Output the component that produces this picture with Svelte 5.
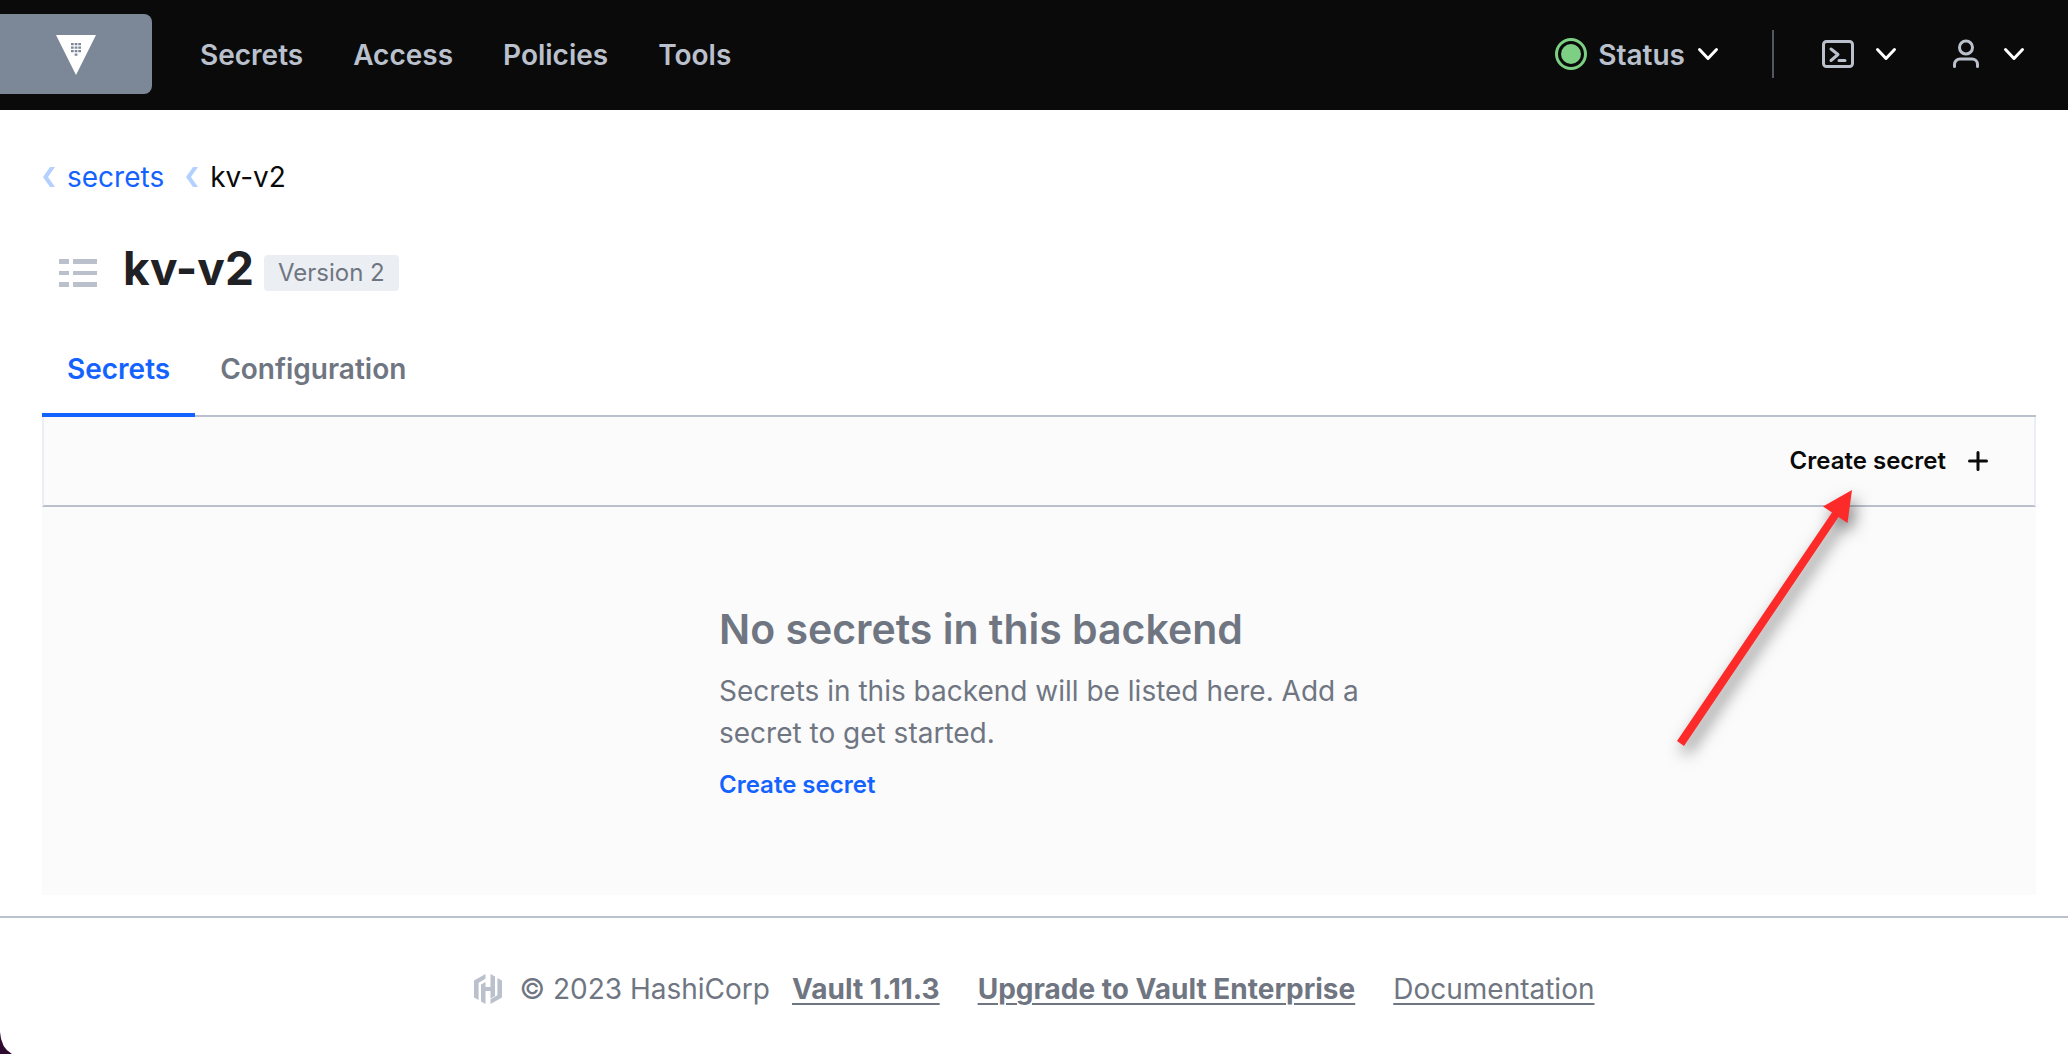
<script>
  const navItems = ['Secrets', 'Access', 'Policies', 'Tools'];
  const tabs = ['Secrets', 'Configuration'];
  let activeTab = $state('Secrets');
</script>

{#snippet chevron()}
  <svg class="chevron" viewBox="0 0 24 24" aria-hidden="true">
    <path d="M3.500 7.500 12 16.500 20.500 7.500" fill="none" stroke="#fff" stroke-width="3" stroke-linecap="round" stroke-linejoin="round" />
  </svg>
{/snippet}

{#snippet crumbMark()}
  <svg class="crumb-mark" viewBox="0 0 12 20" aria-hidden="true">
    <path d="M7 0h5L5 10l7 10H7L0 10z" fill="#b3d0ff" />
  </svg>
{/snippet}

<div class="page">
  <header class="topbar">
    <a class="brand" href="#home" aria-label="Vault home">
      <svg viewBox="0 0 40 40" aria-hidden="true">
        <path d="M0 0h40L20 40z" fill="#fff" />
        <path
          d="M15 8h2.700v2.300H15zM18.700 8h2.700v2.300h-2.700zM22.300 8H25v2.300h-2.700zM15 11.500h2.700v2.300H15zM18.700 11.500h2.700v2.300h-2.700zM22.300 11.500H25v2.300h-2.700zM15 15h2.700v2.300H15zM18.700 15h2.700v2.300h-2.700zM22.300 15H25v2.300h-2.700zM18.700 18.500h2.700v2.300h-2.700z"
          fill="#7c8797"
        />
      </svg>
    </a>
    <nav class="main-nav" aria-label="Main">
      {#each navItems as item}
        <a href="#{item.toLowerCase()}">{item}</a>
      {/each}
    </nav>
    <div class="tools">
      <button class="status" type="button">
        <svg class="dot" viewBox="0 0 32 32" aria-hidden="true">
          <circle cx="16" cy="16" r="14.500" fill="none" stroke="#7dd083" stroke-width="3" />
          <circle cx="16" cy="16" r="10" fill="#7dd083" />
        </svg>
        <span class="status-label">Status</span>
        {@render chevron()}
      </button>
      <span class="divider"></span>
      <button class="icon-button" type="button" aria-label="Console">
        <svg class="glyph" viewBox="0 0 32 32" aria-hidden="true" fill="none" stroke="#bac1cc" stroke-width="3" stroke-linecap="round" stroke-linejoin="round">
          <rect x="1.500" y="3.500" width="29" height="25" rx="3" />
          <path d="M9 11l7 5.500-7 6M17 22.500h6" />
        </svg>
        {@render chevron()}
      </button>
      <button class="icon-button" type="button" aria-label="User menu">
        <svg class="glyph" viewBox="0 0 32 32" aria-hidden="true" fill="none" stroke="#bac1cc" stroke-width="3" stroke-linecap="round">
          <circle cx="16" cy="9.500" r="6.500" />
          <path d="M4.500 28.500v-2a5.500 5.500 0 0 1 5.500-5.500h12a5.500 5.500 0 0 1 5.500 5.500v2" />
        </svg>
        {@render chevron()}
      </button>
    </div>
  </header>

  <main>
    <nav class="crumbs" aria-label="Breadcrumb">
      {@render crumbMark()}
      <a href="#secrets">secrets</a>
      {@render crumbMark()}
      <span>kv-v2</span>
    </nav>

    <div class="heading">
      <svg class="list-icon" viewBox="0 0 38 28" aria-hidden="true" fill="#bac1cc">
        <path d="M0 0h10v5H0zM14 0h24v5H14zM0 12h10v4H0zM14 12h24v4H14zM0 23h10v5H0zM14 23h24v5H14z" />
      </svg>
      <h1>kv-v2</h1>
      <span class="badge">Version 2</span>
    </div>

    <div class="tabs" role="tablist">
      {#each tabs as tab}
        <button type="button" role="tab" aria-selected={activeTab === tab} class:active={activeTab === tab} onclick={() => (activeTab = tab)}>{tab}</button>
      {/each}
    </div>

    <div class="toolbar">
      <a class="create" href="#create">
        Create secret
        <svg viewBox="0 0 20 20" aria-hidden="true">
          <path d="M10 1.500v17M1.500 10h17" stroke="#0a0a0a" stroke-width="3" stroke-linecap="round" />
        </svg>
      </a>
      <svg class="arrow" viewBox="0 0 180 260" aria-hidden="true">
        <path d="M177 0l-4.500 33-9-6L9 256l-7-5L157 22.500l-9-6z" fill="#fd2a2a" />
      </svg>
    </div>

    <section class="empty">
      <div class="message">
        <h2>No secrets in this backend</h2>
        <p>Secrets in this backend will be listed here. Add a secret to get started.</p>
        <a href="#create">Create secret</a>
      </div>
    </section>
  </main>

  <footer>
    <svg class="hashi" viewBox="0 0 28 30" aria-hidden="true" fill="#bac1cc">
      <path d="M11.500 0v4.700L4.600 8.700v17.200L0 23.400V6.600zM11.500 8v5h5V0L21 2.600v19.300l-4.500 2.600V17h-5v13L7 27.400V10.600zM23.400 4.100 28 6.600v16.800L16.500 30v-4.700l6.900-4z" />
    </svg>
    <span class="copyright">© 2023 HashiCorp</span>
    <a class="strong" href="#version">Vault 1.11.3</a>
    <a class="strong" href="#upgrade">Upgrade to Vault Enterprise</a>
    <a href="#docs">Documentation</a>
  </footer>
  <svg class="corner" viewBox="0 0 12 22" aria-hidden="true">
    <path d="M0 0v22h12Q1 16 0 0z" fill="#2f0a30" />
  </svg>
</div>

<style>
  :global(body) {
    margin: 0;
    background: #fff;
  }
  .page {
    position: relative;
    display: flex;
    flex-direction: column;
    min-height: 100vh;
    font-family: Inter, 'Liberation Sans', sans-serif;
    font-size: 28px;
    line-height: 42px;
    color: #0a0a0a;
  }
  .page :global(svg) {
    display: block;
    flex: none;
  }
  a {
    color: inherit;
    text-decoration: none;
  }
  button {
    font: inherit;
    color: inherit;
    background: none;
    border: 0;
    padding: 0;
    cursor: pointer;
  }
  h1,
  h2,
  p {
    margin: 0;
  }

  .topbar {
    display: flex;
    align-items: center;
    height: 110px;
    padding: 0 42px 2px 0;
    box-sizing: border-box;
    background: #0a0a0a;
    color: #bac1cc;
    font-weight: 600;
  }
  .brand {
    display: flex;
    align-items: center;
    justify-content: center;
    width: 152px;
    height: 80px;
    padding-top: 2px;
    box-sizing: border-box;
    border-radius: 0 8px 8px 0;
    background: #7c8797;
  }
  .brand svg {
    width: 40px;
    height: 40px;
  }
  .main-nav {
    display: flex;
    gap: 50px;
    margin-left: 48px;
    padding-top: 2px;
  }
  .tools {
    display: flex;
    align-items: center;
    margin-left: auto;
  }
  .status,
  .icon-button {
    display: flex;
    align-items: center;
  }
  .status {
    gap: 11px;
  }
  .status-label {
    padding-top: 2px;
  }
  .dot,
  .glyph {
    width: 32px;
    height: 32px;
  }
  .chevron {
    width: 24px;
    height: 24px;
  }
  .divider {
    width: 2px;
    height: 48px;
    margin: 0 48px 0 52px;
    background: #525761;
  }
  .icon-button {
    gap: 20px;
  }
  .icon-button + .icon-button {
    margin-left: 52px;
  }

  main {
    flex: 1;
    padding: 46px 32px 21px 42px;
  }
  .crumbs {
    display: flex;
    align-items: center;
    padding-left: 1px;
  }
  .crumb-mark {
    width: 12px;
    height: 20px;
    margin-right: 12px;
  }
  .crumbs a {
    color: #1563ff;
    margin-right: 22px;
  }
  .heading {
    display: flex;
    align-items: center;
    margin-top: 40px;
    padding-left: 17px;
  }
  .list-icon {
    width: 38px;
    height: 28px;
    margin-right: 26px;
  }
  h1 {
    padding-bottom: 10px;
    font-size: 46px;
    line-height: 60px;
    font-weight: 700;
    color: #1f2124;
  }
  .badge {
    margin-left: 10px;
    padding: 0 14px;
    border-radius: 4px;
    background: #ebeef2;
    color: #6f7682;
    font-size: 24px;
    line-height: 36px;
  }
  .tabs {
    display: flex;
    margin-top: 17px;
    border-bottom: 2px solid #bac1cc;
  }
  .tabs button {
    height: 92px;
    margin-bottom: -2px;
    padding: 0 25px;
    border-bottom: 4px solid transparent;
    font-weight: 600;
    color: #6f7682;
  }
  .tabs .active {
    color: #1563ff;
    border-color: #1563ff;
  }
  .toolbar {
    position: relative;
    display: flex;
    align-items: center;
    justify-content: flex-end;
    height: 88px;
    padding-right: 46px;
    border: solid #ebeef2;
    border-width: 0 2px;
    border-bottom: 2px solid #bac1cc;
    background: #fbfbfb;
  }
  .create {
    display: flex;
    align-items: center;
    gap: 22px;
    font-size: 24px;
    font-weight: 600;
  }
  .create svg {
    width: 20px;
    height: 20px;
  }
  .arrow {
    position: absolute;
    top: 73px;
    right: 179px;
    width: 180px;
    height: 260px;
    overflow: visible;
    filter: drop-shadow(4px 8px 8px rgb(0 0 0 / 0.5));
    pointer-events: none;
  }
  .empty {
    display: flex;
    justify-content: center;
    padding: 95px 0 92px;
    background: #fbfbfb;
    color: #6f7682;
  }
  .message {
    width: 640px;
  }
  h2 {
    font-size: 41px;
    line-height: 54px;
    font-weight: 600;
    margin-bottom: 14px;
  }
  .message a {
    display: block;
    margin-top: 13px;
    color: #1563ff;
    font-size: 24px;
    line-height: 36px;
    font-weight: 600;
  }

  footer {
    display: flex;
    align-items: center;
    justify-content: center;
    padding: 50px 0 44px;
    border-top: 2px solid #bac1cc;
    color: #6f7682;
  }
  .hashi {
    width: 28px;
    height: 30px;
    margin-right: 18px;
  }
  .copyright {
    margin-right: 22px;
  }
  footer a {
    text-decoration: underline;
    text-decoration-thickness: 2px;
    text-underline-offset: 4px;
  }
  footer .strong {
    margin-right: 38px;
    font-weight: 700;
  }
  .corner {
    position: absolute;
    left: 0;
    bottom: 0;
    width: 12px;
    height: 22px;
  }
</style>
